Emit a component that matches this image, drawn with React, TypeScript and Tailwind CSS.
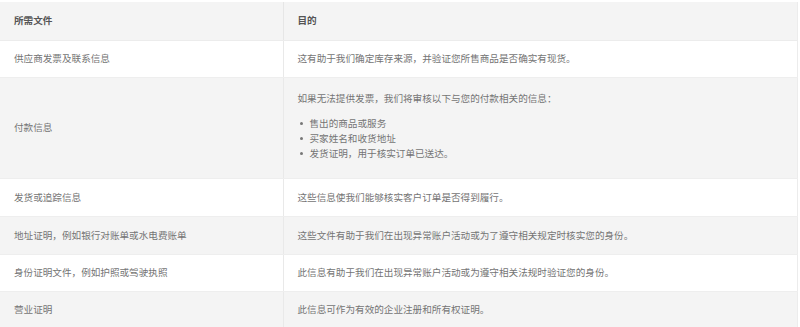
import React from "react";

const font = { fontFamily: '"Noto Sans CJK SC", "Noto Sans", sans-serif' };

const rows: { a: string; b: React.ReactNode; gray: boolean; h: string }[] = [
  { a: "供应商发票及联系信息", b: "这有助于我们确定库存来源，并验证您所售商品是否确实有现货。", gray: false, h: "h-[37px]" },
  { a: "付款信息", b: "LIST", gray: true, h: "h-[101px]" },
  { a: "发货或追踪信息", b: "这些信息使我们能够核实客户订单是否得到履行。", gray: false, h: "h-[38px]" },
  { a: "地址证明，例如银行对账单或水电费账单", b: "这些文件有助于我们在出现异常账户活动或为了遵守相关规定时核实您的身份。", gray: true, h: "h-[38px]" },
  { a: "身份证明文件，例如护照或驾驶执照", b: "此信息有助于我们在出现异常账户活动或为遵守相关法规时验证您的身份。", gray: false, h: "h-[37px]" },
  { a: "营业证明", b: "此信息可作为有效的企业注册和所有权证明。", gray: true, h: "h-[37px]" },
];

export default function App() {
  return (
    <div className="w-[800px] h-[327px] overflow-hidden bg-white pt-[2px]" style={font}>
      <table className="w-[798px] border-collapse text-[9.6px] leading-[14.7px] text-[#747474] table-fixed">
        <colgroup>
          <col className="w-[283px]" />
          <col />
        </colgroup>
        <thead>
          <tr className="bg-[#f4f4f4] h-[38px]">
            <th className="text-left font-bold text-[#555] pl-[14px] border-r border-[#e6e6e6] border-b border-b-[#ececec]">所需文件</th>
            <th className="text-left font-bold text-[#555] pl-[14px] border-r border-[#ececec] border-b border-b-[#ececec]">目的</th>
          </tr>
        </thead>
        <tbody>
          {rows.map((r, i) => (
            <tr key={i} className={`${r.gray ? "bg-[#f4f4f4]" : "bg-white"} ${r.h}`}>
              <td className="pl-[14px] align-middle border-r border-[#e9e9e9] border-b border-b-[#eeeeee]">{r.a}</td>
              <td className="pl-[14px] pr-[14px] align-middle border-r border-[#ececec] border-b border-b-[#eeeeee]">
                {r.b === "LIST" ? (
                  <div className="pt-[13px] pb-[17px]">
                    <p>如果无法提供发票，我们将审核以下与您的付款相关的信息：</p>
                    <ul className="mt-[11px]">
                      {["售出的商品或服务", "买家姓名和收货地址", "发货证明，用于核实订单已送达。"].map((t) => (
                        <li key={t} className="flex items-center">
                          <span className="inline-block w-[3px] h-[3px] rounded-full bg-[#777] ml-[2px] mr-[7px]" />
                          {t}
                        </li>
                      ))}
                    </ul>
                  </div>
                ) : (
                  r.b
                )}
              </td>
            </tr>
          ))}
        </tbody>
      </table>
    </div>
  );
}
